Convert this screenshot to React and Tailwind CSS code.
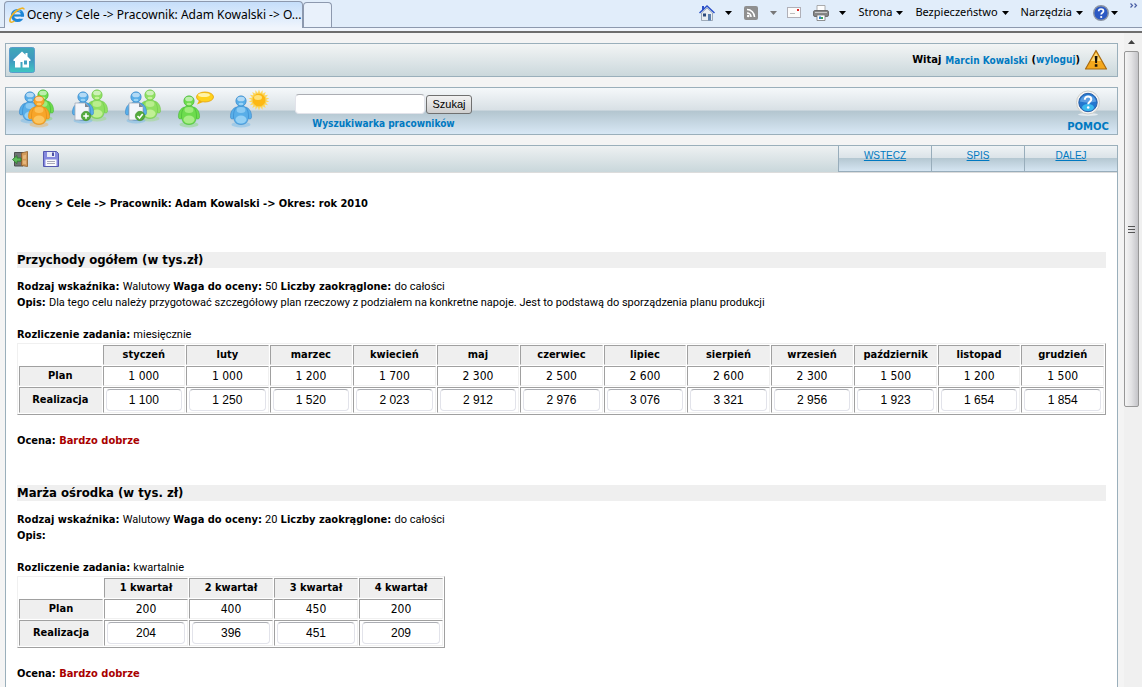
import React from 'react'

const UI_FONT = "font-['Noto_Sans',sans-serif]"

const MONTHS = ['styczeń', 'luty', 'marzec', 'kwiecień', 'maj', 'czerwiec', 'lipiec', 'sierpień', 'wrzesień', 'październik', 'listopad', 'grudzień']
const QUARTERS = ['1 kwartał', '2 kwartał', '3 kwartał', '4 kwartał']

const GOALS = [
    {
        id: 'przychody',
        title: 'Przychody ogółem (w tys.zł)',
        weight: 50,
        description: 'Dla tego celu należy przygotować szczegółowy plan rzeczowy z podziałem na konkretne napoje. Jest to podstawą do sporządzenia planu produkcji',
        period: 'miesięcznie',
        columns: MONTHS,
        plan: ['1 000', '1 000', '1 200', '1 700', '2 300', '2 500', '2 600', '2 600', '2 300', '1 500', '1 200', '1 500'],
        actual: ['1 100', '1 250', '1 520', '2 023', '2 912', '2 976', '3 076', '3 321', '2 956', '1 923', '1 654', '1 854'],
        tableWidth: 'w-full',
    },
    {
        id: 'marza',
        title: 'Marża ośrodka (w tys. zł)',
        weight: 20,
        description: '',
        period: 'kwartalnie',
        columns: QUARTERS,
        plan: ['200', '400', '450', '200'],
        actual: ['204', '396', '451', '209'],
        tableWidth: 'w-[428px]',
    },
]

const PEOPLE = {
    blue: { light: '#b4e2fc', mid: '#58aee8', dark: '#2f7fc4' },
    green: { light: '#c8f8a4', mid: '#6ddb4d', dark: '#3cae30' },
    lime: { light: '#dbf9b0', mid: '#90e062', dark: '#68c244' },
    orange: { light: '#ffd77c', mid: '#f7a52a', dark: '#d9860f' },
}

function Person({ x, y, tone }) {
    const c = PEOPLE[tone]
    return (
        <g transform={`translate(${x} ${y})`}>
            <ellipse cx="0" cy="23.500" rx="9.500" ry="3" fill={c.mid} opacity="0.35" />
            <path d="M-4.500 6c-4 1-6.500 5.500-6 10.500.5 2 3 2 3.500 0L-4 9zM4.500 6c4 1 6.500 5.500 6 10.500-.5 2-3 2-3.500 0L4 9z" fill={c.mid} stroke={c.dark} strokeWidth="0.5" />
            <path d="M0 4.500C-5 4.500-7.500 9-7.500 15c0 6 3 8.500 7.500 8.500s7.500-2.500 7.500-8.500c0-6-2.500-10.500-7.500-10.500z" fill={c.mid} stroke={c.dark} strokeWidth="0.5" />
            <ellipse cx="0" cy="18.500" rx="5.500" ry="4" fill={c.light} opacity="0.65" />
            <ellipse cx="0" cy="9" rx="4.500" ry="3" fill={c.light} opacity="0.55" />
            <circle cx="0" cy="0" r="5.200" fill={c.mid} stroke={c.dark} strokeWidth="0.6" />
            <ellipse cx="0" cy="-2" rx="3.800" ry="2.300" fill="#fff" opacity="0.55" />
            <ellipse cx="0" cy="3" rx="2.500" ry="1.300" fill={c.light} opacity="0.7" />
        </g>
    )
}

function Sheet({ x, children }) {
    return (
        <g transform={`translate(${x} 15)`}>
            <path d="M0 0h10l4 4v13H0z" fill="#f3f5fa" stroke="#a3abb8" strokeWidth="0.8" />
            <path d="M10 0v4h4z" fill="#7f8894" />
            <circle cx="11" cy="13" r="4.700" fill="#54ab3c" stroke="#3a8a2a" strokeWidth="0.6" />
            {children}
        </g>
    )
}

const RAYS = [0, 20, 40, 60, 80, 100, 120, 140, 160, 180, 200, 220, 240, 260, 280, 300, 320, 340]

const SHORTCUTS = [
    {
        label: 'Zespół',
        art: <><Person x={25} y={7} tone="green" /><Person x={12} y={9} tone="blue" /><Person x={21} y={13} tone="orange" /></>,
    },
    {
        label: 'Nowa ocena',
        art: <><Person x={26} y={7} tone="lime" /><Person x={12} y={9} tone="blue" /><Sheet x={4}><path d="M11 10.200v5.600M8.200 13h5.600" stroke="#fff" strokeWidth="1.600" /></Sheet></>,
    },
    {
        label: 'Zatwierdzone oceny',
        art: <><Person x={26} y={7} tone="lime" /><Person x={12} y={9} tone="blue" /><Sheet x={5}><path d="M8.500 13l2 2 3.200-4" fill="none" stroke="#fff" strokeWidth="1.600" /></Sheet></>,
    },
    {
        label: 'Komentarze',
        art: (
            <>
                <Person x={12} y={13} tone="green" />
                <path d="M22 12.500l-2 4 6-2.500z" fill="#f2b705" />
                <ellipse cx="28" cy="9" rx="8.500" ry="5" fill="#ffd21c" stroke="#e3a008" strokeWidth="0.8" />
                <ellipse cx="27" cy="7" rx="6" ry="2" fill="#fff3a8" />
            </>
        ),
    },
    {
        label: 'Urlopy',
        art: (
            <>
                <Person x={11} y={13} tone="blue" />
                {RAYS.map(a => <path key={a} d="M29 1.500l1.500 4h-3z" fill="#ffd85c" transform={`rotate(${a} 29 12)`} />)}
                <circle cx="29" cy="12" r="6.800" fill="#fdb813" stroke="#f5cf52" strokeWidth="0.8" />
                <ellipse cx="28" cy="9.500" rx="4" ry="2.500" fill="#ffe27a" />
            </>
        ),
    },
]

function BrowserIcon() {
    return (
        <svg viewBox="0 0 16 16" className="size-4 shrink-0" aria-hidden="true">
            <circle cx="8.500" cy="8.500" r="5" fill="none" stroke="#1d86d6" strokeWidth="3.200" />
            <path d="M5 8.500h9.500" stroke="#1d86d6" strokeWidth="2.200" />
            <path d="M10.500 9.800H16v2h-5.500z" fill="#e3eefc" />
            <path d="M5 5.500a4.500 4.500 0 0 1 6.500-1" fill="none" stroke="#7cc8f5" strokeWidth="1.200" />
            <path d="M1.500 15C-.5 12.500 3 7 8 3.500 11.500 1 15 .3 15 2.500" fill="none" stroke="#f0b323" strokeWidth="1.700" />
            <path d="M1.500 15c1 .6 2.500 0 4-1" fill="none" stroke="#f0b323" strokeWidth="1.500" />
        </svg>
    )
}

function Arrow({ className = 'text-black' }) {
    return (
        <svg viewBox="0 0 7 4" className={`h-1 w-[7px] shrink-0 ${className}`} aria-hidden="true">
            <path d="M0 0h7L3.500 4z" fill="currentColor" />
        </svg>
    )
}

function BrowserBar() {
    return (
        <header className={`flex h-[33px] shrink-0 flex-col border-b-2 border-[#6e6e6e] bg-[#f0f5fc] text-black ${UI_FONT}`}>
            <div className="flex h-7 shrink-0 items-end border-b border-[#8d99ae] bg-[#e1edfa]">
                <div className="-mb-px ml-1 flex h-[27px] w-[299px] shrink-0 items-center gap-0.5 rounded-t-sm border border-b-0 border-[#8d99ae] bg-linear-to-b from-[#c5defa] to-[#f0f5fc] pl-1 text-xs">
                    <BrowserIcon />
                    <span className="whitespace-nowrap">Oceny &gt; Cele -&gt; Pracownik: Adam Kowalski -&gt; O...</span>
                </div>
                <button aria-label="Nowa karta" className="h-[25px] w-[29px] shrink-0 rounded-t-sm border border-b-0 border-[#8d99ae] bg-[#e9f1fb]" />
                <nav className="flex h-full flex-1 items-center justify-end pr-1 pb-0.5 text-[11px]">
                    <button aria-label="Strona główna" className="flex items-center gap-2.5">
                        <svg viewBox="0 0 16 16" className="size-4">
                            <path d="M2.500 8v7.500h11V8L8 3z" fill="#e9edf2" stroke="#8b98a8" strokeWidth="0.8" />
                            <path d="M3 1h2v4H3z" fill="#2b50c8" />
                            <path d="M.5 8L8 1l7.500 7" fill="none" stroke="#2b50c8" strokeWidth="1.500" />
                            <path d="M4 8.500h3v3H4z" fill="#2d4a7c" />
                            <path d="M9 9h3v6.500H9z" fill="#5b7fae" />
                        </svg>
                        <Arrow />
                    </button>
                    <button aria-label="Kanały" className="ml-3 flex items-center gap-3">
                        <svg viewBox="0 0 14 14" className="size-3.5">
                            <rect width="14" height="14" rx="2" fill="#8f8f8f" />
                            <path d="M3 7A4 4 0 0 1 7 11M3 3.500A7.500 7.500 0 0 1 10.500 11" fill="none" stroke="#fff" strokeWidth="1.600" />
                            <circle cx="4.200" cy="10" r="1.300" fill="#fff" />
                        </svg>
                        <Arrow className="text-[#777]" />
                    </button>
                    <button aria-label="Poczta" className="ml-2.5">
                        <svg viewBox="0 0 14 11" className="h-[11px] w-3.5">
                            <rect x="0.500" y="0.500" width="13" height="10" fill="#fbfbfb" stroke="#b0b0b8" />
                            <path d="M10 2h2v2h-2z" fill="#e02424" />
                            <path d="M3 6.500h5" stroke="#bbb" />
                        </svg>
                    </button>
                    <button aria-label="Drukuj" className="ml-3 flex items-center gap-2.5">
                        <svg viewBox="0 0 16 16" className="size-4">
                            <path d="M4 .5h8V7H4z" fill="#fdfdfd" stroke="#999" strokeWidth="0.8" />
                            <rect x="0.500" y="5.500" width="15" height="6" rx="1.500" fill="#868686" stroke="#5b5b5b" strokeWidth="0.8" />
                            <path d="M2 7.500h12" stroke="#c9c9c9" />
                            <path d="M4 10h8v5.500H4z" fill="#fff" stroke="#777" strokeWidth="0.8" />
                            <path d="M6 11.500h2V14H6z" fill="#2f7fd0" />
                            <path d="M8 12h2v2H8z" fill="#3aa55a" />
                        </svg>
                        <Arrow />
                    </button>
                    <button className="ml-3 flex items-center gap-1">Strona<Arrow /></button>
                    <button className="ml-3 flex items-center gap-1">Bezpieczeństwo<Arrow /></button>
                    <button className="ml-3 flex items-center gap-1">Narzędzia<Arrow /></button>
                    <button aria-label="Pomoc przeglądarki" className="ml-2.5 flex items-center gap-0.5">
                        <svg viewBox="0 0 16 16" className="size-4">
                            <circle cx="8" cy="8" r="7.300" fill="#2c59c4" stroke="#8a93a3" strokeWidth="1.400" />
                            <path d="M5.700 6.300c0-3 4.800-3 4.800-.2 0 1.700-2.300 1.700-2.300 3.400" fill="none" stroke="#fff" strokeWidth="1.700" />
                            <circle cx="8.200" cy="12" r="1.100" fill="#fff" />
                        </svg>
                        <Arrow />
                    </button>
                    <button aria-label="Więcej" className="ml-3 self-start text-[#4a5fa5]">
                        <svg viewBox="0 0 8 5" className="mt-[3px] h-[5px] w-2">
                            <path d="M.5.5l2 2-2 2M4.500.5l2 2-2 2" fill="none" stroke="currentColor" strokeWidth="1.200" />
                        </svg>
                    </button>
                </nav>
            </div>
        </header>
    )
}

function WelcomeBar() {
    return (
        <div className="flex h-[34px] items-center justify-between border border-[#9aafbb] bg-linear-to-b from-[#f3f5f5] to-[#cbd8dc] px-[3px]">
            <a href="#start" aria-label="Start">
                <svg viewBox="0 0 26 26" className="size-[26px]">
                    <defs>
                        <linearGradient id="homeFill" x1="0" y1="0" x2="0" y2="1">
                            <stop offset="0" stopColor="#3fa9b9" />
                            <stop offset="0.500" stopColor="#3f97bf" />
                            <stop offset="1" stopColor="#3fc7c2" />
                        </linearGradient>
                    </defs>
                    <rect x="0.500" y="0.500" width="25" height="25" rx="2" fill="url(#homeFill)" stroke="#5a9ccb" />
                    <path d="M13 4.500L4.500 12.500V14H6v6.500h5.500V15h2v5.500H20V14h1.500v-1.500L18.500 9.500V6h-2v1.800z" fill="#fff" />
                    <path d="M15 13.500h3v4h-3z" fill="#3f9fc0" />
                </svg>
            </a>
            <div className="flex items-center gap-1 pr-1.5 font-['DejaVu_Sans_Condensed','DejaVu_Sans',sans-serif] text-[11px] font-bold">
                <span>Witaj</span>
                <a href="#profil" className="text-[10px] text-[#0079c1]">Marcin Kowalski</a>
                <span>(<a href="#wyloguj" className="text-[10px] text-[#0079c1]">wyloguj</a>)</span>
                <svg viewBox="0 0 24 22" className="h-[22px] w-6">
                    <path d="M12 1.500L22.500 20h-21z" fill="#f5a81c" stroke="#a86a10" strokeWidth="1.200" strokeLinejoin="round" />
                    <path d="M12 3.500L17 12H7z" fill="#ffd873" />
                    <path d="M10.700 7h2.800l-.5 7h-1.800zM10.800 15.300h2.600v2.500h-2.600z" fill="#1b1206" />
                </svg>
            </div>
        </div>
    )
}

function ShortcutBar() {
    return (
        <div className="mt-2.5 flex h-12 items-start justify-between border border-[#9aafbb] bg-[linear-gradient(to_bottom,#f5f8fa_0%,#d8e0e5_48%,#b3c5cf_50%,#d8e8f5_100%)] pl-3">
            <div className="flex">
                <div className="flex gap-[13px]">
                    {SHORTCUTS.map(s => (
                        <button key={s.label} aria-label={s.label} className="h-11 w-10">
                            <svg viewBox="0 0 40 44" className="h-11 w-10">{s.art}</svg>
                        </button>
                    ))}
                </div>
                <form className="ml-[25px] flex flex-col items-center pt-1.5" onSubmit={e => e.preventDefault()}>
                    <div className="flex items-center gap-px">
                        <input id="szukaj" type="text" className="h-5 w-[130px] rounded-sm border border-[#e2e3ea] border-t-[#abadb3] bg-white px-1 text-xs" />
                        <button className="h-[19px] w-[46px] rounded-[3px] border border-[#707070] bg-linear-to-b from-[#f2f2f2] to-[#cfcfcf] font-['Liberation_Sans',Arial,sans-serif] text-[11px] leading-4 text-black">Szukaj</button>
                    </div>
                    <label htmlFor="szukaj" className="mt-1 font-['DejaVu_Sans_Condensed','DejaVu_Sans',sans-serif] text-[10px] leading-3 font-bold text-[#0079c1]">Wyszukiwarka pracowników</label>
                </form>
            </div>
            <a href="#pomoc" className="flex w-[58px] flex-col items-center pt-0.5 font-['DejaVu_Sans',sans-serif] text-[10px] leading-3 font-bold text-[#0079c1]">
                <svg viewBox="0 0 26 26" className="size-[26px]" aria-hidden="true">
                    <ellipse cx="13" cy="24.500" rx="10" ry="1.500" fill="#e4ebf0" />
                    <circle cx="13" cy="12.500" r="11.500" fill="#f5f5f4" stroke="#cdcdc9" />
                    <circle cx="13" cy="12.500" r="9.200" fill="#2377cf" stroke="#2a5fa8" />
                    <ellipse cx="13" cy="17.500" rx="6" ry="3.500" fill="#3fc8f5" opacity="0.800" />
                    <path d="M4.800 11.500a8.500 8.500 0 0 1 16.400 0c-5 1.500-11 1.500-16.400 0z" fill="#8cc0f0" opacity="0.550" />
                    <path d="M9.800 9.700c0-4.500 6.500-4 6.500-.4 0 2.500-3.100 2.400-3.100 5" fill="none" stroke="#fff" strokeWidth="2" />
                    <circle cx="13.200" cy="17.500" r="1.300" fill="#fff" />
                </svg>
                <span className="mt-[5px]">POMOC</span>
            </a>
        </div>
    )
}

function PageToolbar() {
    return (
        <div className="flex h-[27px] items-stretch justify-between border-b border-[#dcdcdc] bg-linear-to-b from-[#eef1f2] to-[#c9d7db]">
            <div className="flex items-center gap-3.5 pl-1.5">
                <button aria-label="Wyjdź">
                    <svg viewBox="0 0 17 16" className="h-4 w-[17px]">
                        <path d="M2.500 1.500H11V15H2.500z" fill="#6f7274" stroke="#4d4f50" />
                        <path d="M9.500 2l6-1.500v15l-6-1z" fill="#d19a5b" stroke="#8a5a28" strokeWidth="0.800" />
                        <path d="M11 4.500l3-.7v4l-3 .2zM11 9.500l3-.1v3.800l-3-.4z" fill="#e6b67c" />
                        <path d="M.5 8.500L5 4.500V7h4v3.200H5v2.500z" fill="#5dbb5a" stroke="#2c7a2d" strokeWidth="0.800" />
                    </svg>
                </button>
                <button aria-label="Zapisz">
                    <svg viewBox="0 0 16 16" className="size-4">
                        <path d="M.5.5h13l2 2v13H.5z" fill="#8589de" stroke="#5558b0" />
                        <path d="M4 1h8v5H4z" fill="#e8ebf7" />
                        <path d="M9 1.500h2v3.500H9z" fill="#4c4fa3" />
                        <path d="M2.500 8.500h11V15h-11z" fill="#fbfbfd" />
                        <path d="M4 10.500h8M4 12.500h8" stroke="#a9a9b8" />
                    </svg>
                </button>
            </div>
            <nav className="flex font-['Liberation_Sans',Arial,sans-serif] text-[10px] leading-5 text-[#0079c1]">
                {['WSTECZ', 'SPIS', 'DALEJ'].map(label => (
                    <a key={label} href={`#${label.toLowerCase()}`} className="h-[26px] w-[93px] border-b border-l border-[#98adbb] bg-[linear-gradient(to_bottom,#eff3f5_0%,#dbe3e8_48%,#b5c8d2_50%,#d5e5f2_100%)] text-center underline">
                        {label}
                    </a>
                ))}
            </nav>
        </div>
    )
}

const CELL = 'border border-t-[#a0a0a0] border-l-[#a0a0a0] border-r-[#f0f0f0] border-b-[#f0f0f0] p-0 text-center'

function GoalTable({ goal }) {
    return (
        <table className={`table-fixed border-separate border-spacing-px border border-t-[#f0f0f0] border-l-[#f0f0f0] border-r-[#a0a0a0] border-b-[#a0a0a0] ${goal.tableWidth}`}>
            <thead>
                <tr className="h-5">
                    <td className="p-0" />
                    {goal.columns.map(c => (
                        <th key={c} scope="col" className={`${CELL} bg-[#efefef]`}>{c}</th>
                    ))}
                </tr>
            </thead>
            <tbody>
                <tr className="h-5">
                    <th scope="row" className={`${CELL} bg-[#efefef]`}>Plan</th>
                    {goal.plan.map((v, i) => (
                        <td key={i} className={`${CELL} text-xs leading-4`}>{v}</td>
                    ))}
                </tr>
                <tr>
                    <th scope="row" className={`${CELL} bg-[#efefef]`}>Realizacja</th>
                    {goal.actual.map((v, i) => (
                        <td key={i} className={`${CELL} px-0.5 py-px`}>
                            <input
                                aria-label={`Realizacja, ${goal.columns[i]}`}
                                defaultValue={v}
                                className="block h-[22px] w-full rounded-sm border border-[#e2e3ea] border-t-[#abadb3] bg-white text-center font-['Liberation_Sans',Arial,sans-serif] text-xs text-black"
                            />
                        </td>
                    ))}
                </tr>
            </tbody>
        </table>
    )
}

// Bold field name followed by its value in the lighter text face
function Field({ label, children }) {
    return (
        <>
            <b>{label}</b> <span className="font-['Roboto',sans-serif]">{children}</span>{' '}
        </>
    )
}

function Goal({ goal }) {
    return (
        <section className="mb-9">
            <h2 className="mb-[11px] bg-[#efefef] text-[13px] leading-4 font-bold">{goal.title}</h2>
            <p>
                <Field label="Rodzaj wskaźnika:">Walutowy</Field>
                <Field label="Waga do oceny:">{goal.weight}</Field>
                <Field label="Liczby zaokrąglone:">do całości</Field>
            </p>
            <p className="mb-4"><Field label="Opis:">{goal.description}</Field></p>
            <p><Field label="Rozliczenie zadania:">{goal.period}</Field></p>
            <GoalTable goal={goal} />
            <p className="mt-[18px]"><b>Ocena: <span className="text-[#a90000]">Bardzo dobrze</span></b></p>
        </section>
    )
}

function ScrollBar() {
    return (
        <div className="flex w-[18px] shrink-0 flex-col bg-[#f0f0f0]" aria-hidden="true">
            <svg viewBox="0 0 15 18" className="h-[18px] w-[15px]">
                <path d="M4 11l3.500-4 3.500 4z" fill="#404040" />
            </svg>
            <div className="flex h-[356px] w-[15px] flex-col items-center justify-center gap-0.5 rounded-xs border border-[#979797] bg-linear-to-r from-[#f5f5f5] via-[#e2e2e4] to-[#c4c4c8]">
                <span className="h-px w-[7px] bg-[#555]" />
                <span className="h-px w-[7px] bg-[#555]" />
                <span className="h-px w-[7px] bg-[#555]" />
            </div>
        </div>
    )
}

export default function App() {
    return (
        <div className="flex h-screen flex-col overflow-hidden bg-[#f4f4f4] text-black">
            <BrowserBar />
            <div className="flex min-h-0 flex-1">
                <main className="flex min-w-0 flex-1 flex-col overflow-hidden pt-2.5 pr-1.5 pl-[5px]">
                    <WelcomeBar />
                    <ShortcutBar />
                    <div className="mt-2.5 min-h-0 flex-1 overflow-hidden border border-b-0 border-[#9aafbb] bg-white">
                        <PageToolbar />
                        <div className="px-[11px] pt-[23px] font-['DejaVu_Sans_Condensed','DejaVu_Sans',sans-serif] text-[11px] leading-4">
                            <h1 className="mb-10 font-bold">Oceny &gt; Cele -&gt; Pracownik: Adam Kowalski -&gt; Okres: rok 2010</h1>
                            {GOALS.map(g => <Goal key={g.id} goal={g} />)}
                        </div>
                    </div>
                </main>
                <ScrollBar />
            </div>
        </div>
    )
}
